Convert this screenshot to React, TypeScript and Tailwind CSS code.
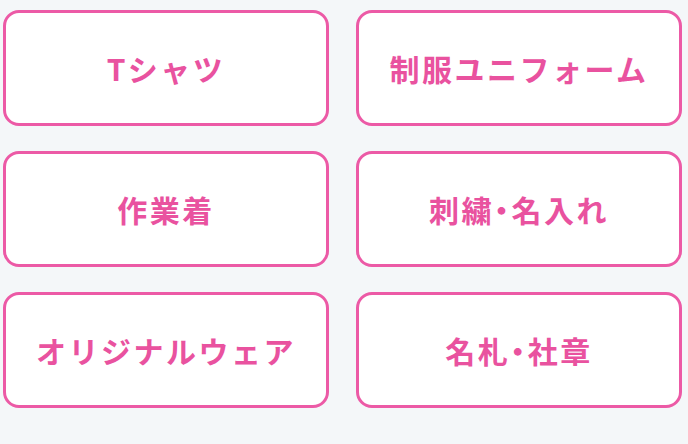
// カテゴリ一覧
const categories = [
  'Tシャツ',
  '制服ユニフォーム',
  '作業着',
  '刺繍・名入れ',
  'オリジナルウェア',
  '名札・社章',
];

function Label({ text }: { text: string }) {
  // 中黒だけ詰める
  const parts = text.split('・');
  return (
    <span>
      {parts.map((p, i) => (
        <span key={i}>
          {i > 0 && <span className="[font-feature-settings:'palt']">・</span>}
          {p}
        </span>
      ))}
    </span>
  );
}

export default function App() {
  return (
    <div className="min-h-[444px] w-[688px] bg-[#f4f7f9] pt-[10px] pl-[3px] pr-[6px] font-['Noto_Sans_CJK_JP','Noto_Sans',sans-serif]">
      <div className="grid grid-cols-2 gap-x-[27px] gap-y-[25px]">
        {categories.map((name) => (
          <a
            key={name}
            href="#"
            className="flex h-[116px] items-center justify-center rounded-[16px] border-[3px] border-[#ec5aa6] bg-white text-[30px] font-bold tracking-[2.5px] text-[#e9529f]"
          >
            <Label text={name} />
          </a>
        ))}
      </div>
    </div>
  );
}
